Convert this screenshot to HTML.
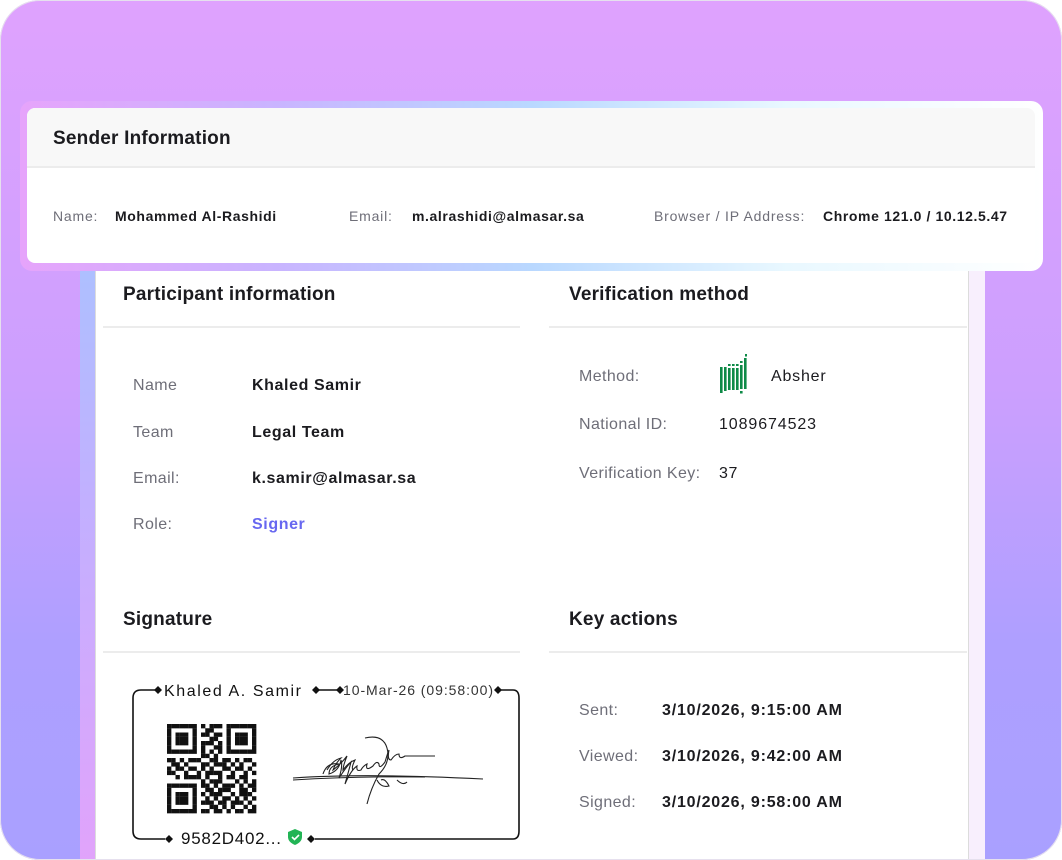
<!DOCTYPE html>
<html><head><meta charset="utf-8"><style>
*{margin:0;padding:0;box-sizing:border-box}
body{width:1062px;height:860px;background:#fff;font-family:"Liberation Sans",sans-serif;position:relative;overflow:hidden;color:#1b1b1f}
.wrap{position:absolute;left:0;top:0;width:1062px;height:860px;border-radius:40px;overflow:hidden;background:linear-gradient(180deg,#dfa2fe 0%,#cc9ffe 45%,#ae9fff 75%,#a9a0ff 100%)}
.bord{position:absolute;left:0;top:0;width:1062px;height:860px;border-radius:40px;border:1.5px solid #e6e0ee;pointer-events:none}
.a{position:absolute;white-space:nowrap}
.panelL{position:absolute;left:80px;top:262px;width:16px;height:600px;background:linear-gradient(180deg,#adc0ff 0%,#c2b0ff 40%,#e1a3fb 100%)}
.panelR{position:absolute;left:968px;top:262px;width:17px;height:600px;background:#f8effd}
.card{position:absolute;left:95px;top:250px;width:874px;height:609px;background:#fff;border:1.5px solid #dcdcdc;border-bottom:none;border-radius:12px 12px 0 0}
.frame{position:absolute;left:20px;top:101px;width:1023px;height:170px;border-radius:12px;background:linear-gradient(90deg,#e6a4fb 0%,#c9b4ff 25%,#b9d8ff 50%,#e9f8ff 75%,#fff 100%)}
.scard{position:absolute;left:27px;top:108px;width:1008px;height:155px;border-radius:8px;background:#fff;overflow:hidden}
.shead{position:absolute;left:0;top:0;width:100%;height:60px;background:#f8f8f8;border-bottom:2px solid #ececec}
.h{font-size:19px;font-weight:700;color:#1b1b1f;letter-spacing:0.2px}
.div{position:absolute;height:2px;background:#ececec}
.lbl{font-size:16px;color:#6e6e78;letter-spacing:0.4px}
.val{font-size:16px;font-weight:700;color:#1b1b1f;letter-spacing:0.6px}
.sl{font-size:14px;color:#6e6e78;letter-spacing:0.8px}
.sv{font-size:14px;font-weight:700;color:#1b1b1f;letter-spacing:0.6px}
</style></head><body>
<div class="wrap">
<div class="panelL"></div>
<div class="panelR"></div>
<div class="card"></div>
<div class="frame"></div>
<div class="scard"><div class="shead"></div></div>
<div class="a h" style="left:53px;top:128px">Sender Information</div>
<div class="a sl" style="left:53px;top:208px">Name:</div>
<div class="a sv" style="left:115px;top:208px">Mohammed Al-Rashidi</div>
<div class="a sl" style="left:349px;top:208px">Email:</div>
<div class="a sv" style="left:412px;top:208px">m.alrashidi@almasar.sa</div>
<div class="a sl" style="left:654px;top:208px">Browser / IP Address:</div>
<div class="a sv" style="left:823px;top:208px">Chrome 121.0 / 10.12.5.47</div>

<div class="a h" style="left:123px;top:284px">Participant information</div>
<div class="a h" style="left:569px;top:284px">Verification method</div>
<div class="div" style="left:103px;top:326px;width:417px"></div>
<div class="div" style="left:549px;top:326px;width:418px"></div>

<div class="a lbl" style="left:133px;top:377px">Name</div>
<div class="a val" style="left:252px;top:377px">Khaled Samir</div>
<div class="a lbl" style="left:133px;top:424px">Team</div>
<div class="a val" style="left:252px;top:424px">Legal Team</div>
<div class="a lbl" style="left:133px;top:470px">Email:</div>
<div class="a val" style="left:252px;top:470px">k.samir@almasar.sa</div>
<div class="a lbl" style="left:133px;top:516px">Role:</div>
<div class="a val" style="left:252px;top:516px;color:#6767f0">Signer</div>

<div class="a lbl" style="left:579px;top:368px">Method:</div>
<svg class="a" style="left:719px;top:353px" width="30" height="42" viewBox="0 0 30 42">
<g fill="#0e8a47"><rect x="1" y="14" width="2.6" height="26"/><rect x="5" y="14" width="2.6" height="24"/><rect x="9" y="15" width="2.6" height="22"/><rect x="13" y="15" width="2.6" height="22"/><rect x="17" y="15" width="2.6" height="22"/><rect x="21" y="12" width="2.6" height="24"/><rect x="25" y="5" width="2.6" height="31"/>
<rect x="9" y="11" width="2.6" height="2"/><rect x="13" y="11" width="2.6" height="2"/><rect x="17" y="11" width="2.6" height="2"/><rect x="21" y="8" width="2.6" height="2"/><rect x="26" y="1" width="2" height="2.5"/><rect x="21" y="38" width="2.6" height="2.5"/></g></svg>
<div class="a val" style="left:771px;top:368px;font-weight:400;letter-spacing:0.8px">Absher</div>
<div class="a lbl" style="left:579px;top:416px">National ID:</div>
<div class="a val" style="left:719px;top:416px;font-weight:400;letter-spacing:0.9px">1089674523</div>
<div class="a lbl" style="left:579px;top:465px">Verification Key:</div>
<div class="a val" style="left:719px;top:465px;font-weight:400">37</div>

<div class="a h" style="left:123px;top:609px">Signature</div>
<div class="a h" style="left:569px;top:609px">Key actions</div>
<div class="div" style="left:103px;top:651px;width:417px"></div>
<div class="div" style="left:549px;top:651px;width:418px"></div>

<div class="a lbl" style="left:579px;top:702px">Sent:</div>
<div class="a val" style="left:662px;top:702px;font-weight:700;letter-spacing:0.8px">3/10/2026, 9:15:00 AM</div>
<div class="a lbl" style="left:579px;top:748px">Viewed:</div>
<div class="a val" style="left:662px;top:748px;font-weight:700;letter-spacing:0.8px">3/10/2026, 9:42:00 AM</div>
<div class="a lbl" style="left:579px;top:794px">Signed:</div>
<div class="a val" style="left:662px;top:794px;font-weight:700;letter-spacing:0.8px">3/10/2026, 9:58:00 AM</div>

<svg class="a" style="left:125px;top:680px" width="400" height="170" viewBox="0 0 400 170">
<g fill="none" stroke="#111" stroke-width="1.6">
<path d="M30 10 H16 Q8 10 8 18 V151 Q8 159 16 159 H40"/>
<path d="M192 10 H214"/>
<path d="M370 10 H388 Q394 10 394 18 V151 Q394 159 388 159 H190"/>
</g>
<g fill="#111">
<path d="M29 10 l4 -4 l4 4 l-4 4z"/><path d="M187 10 l4 -4 l4 4 l-4 4z"/><path d="M211 10 l4 -4 l4 4 l-4 4z"/><path d="M369 10 l4 -4 l4 4 l-4 4z"/>
<path d="M40 159 l4 -4 l4 4 l-4 4z"/><path d="M182 159 l4 -4 l4 4 l-4 4z"/>
</g>
<text x="39" y="16" font-family="Liberation Sans" font-size="16" fill="#111" textLength="137" lengthAdjust="spacing">Khaled  A.  Samir</text>
<text x="218" y="15" font-family="Liberation Sans" font-size="14" fill="#333" textLength="150" lengthAdjust="spacing">10-Mar-26 (09:58:00)</text>
<text x="56" y="164" font-family="Liberation Sans" font-size="17" fill="#111" textLength="100" lengthAdjust="spacing">9582D402...</text>
<path d="M170 149 l7 3 v5 q0 5 -7 8 q-7 -3 -7 -8 v-5z" fill="#22b455"/>
<path d="M167 157 l2.5 2.5 l4.5 -4.5" stroke="#fff" stroke-width="1.6" fill="none"/>
<g id="qr" transform="translate(42,44)"></g>
<g fill="none" stroke="#222" stroke-width="1.1">
<path d="M168 98 Q240 93 358 99"/>
<path d="M168 100 Q230 96 300 97"/>
<path d="M198 94 q4 -12 16 -10 q-10 2 -10 10 q10 -3 12 -14 q2 6 -2 18 q8 -12 12 -16 q-2 8 -6 22 q6 -14 12 -18 q-1 6 4 4 q2 -4 6 -6 q-2 8 6 2 q4 -6 6 -2 q0 6 6 -2 q3 -10 4 -12 q-2 10 2 10 q4 -6 8 -6 q0 6 6 2 q10 0 30 0"/>
<path d="M202 90 q6 -10 14 -12 q-6 6 -8 12 q8 -6 14 -14 q-4 10 -4 14 q6 -8 12 -10 q-4 8 -2 10"/>
<path d="M240 58 q18 -4 22 10 q4 14 -8 26 q-8 14 -12 30"/>
<path d="M252 100 q4 8 12 6 q-4 -8 -8 -6"/>
<path d="M272 100 q6 6 10 2"/>
</g>
</svg>
<script>
var rows=[
"111111101011101111111",
"100000100110001000001",
"101110101101101011101",
"101110100011001011101",
"101110101110101011101",
"100000101001101000001",
"111111101010101111111",
"000000001101000000000",
"110101110011011010110",
"011010001101110101001",
"101101101010011011010",
"110010010111100100101",
"001011110100101101100",
"000000001011100010101",
"111111101101011101011",
"100000100110111001101",
"101110101011100101110",
"101110100101011010101",
"101110101110110111010",
"100000100011010100101",
"111111101101101011011"];
var s=4.25,h="";
for(var r=0;r<21;r++)for(var c=0;c<21;c++)if(rows[r][c]=="1")h+='<rect x="'+(c*s)+'" y="'+(r*s)+'" width="'+(s+0.1)+'" height="'+(s+0.1)+'" fill="#111"/>';
document.getElementById("qr").innerHTML=h;
</script>
</div>
<div class="bord"></div>
</body></html>
